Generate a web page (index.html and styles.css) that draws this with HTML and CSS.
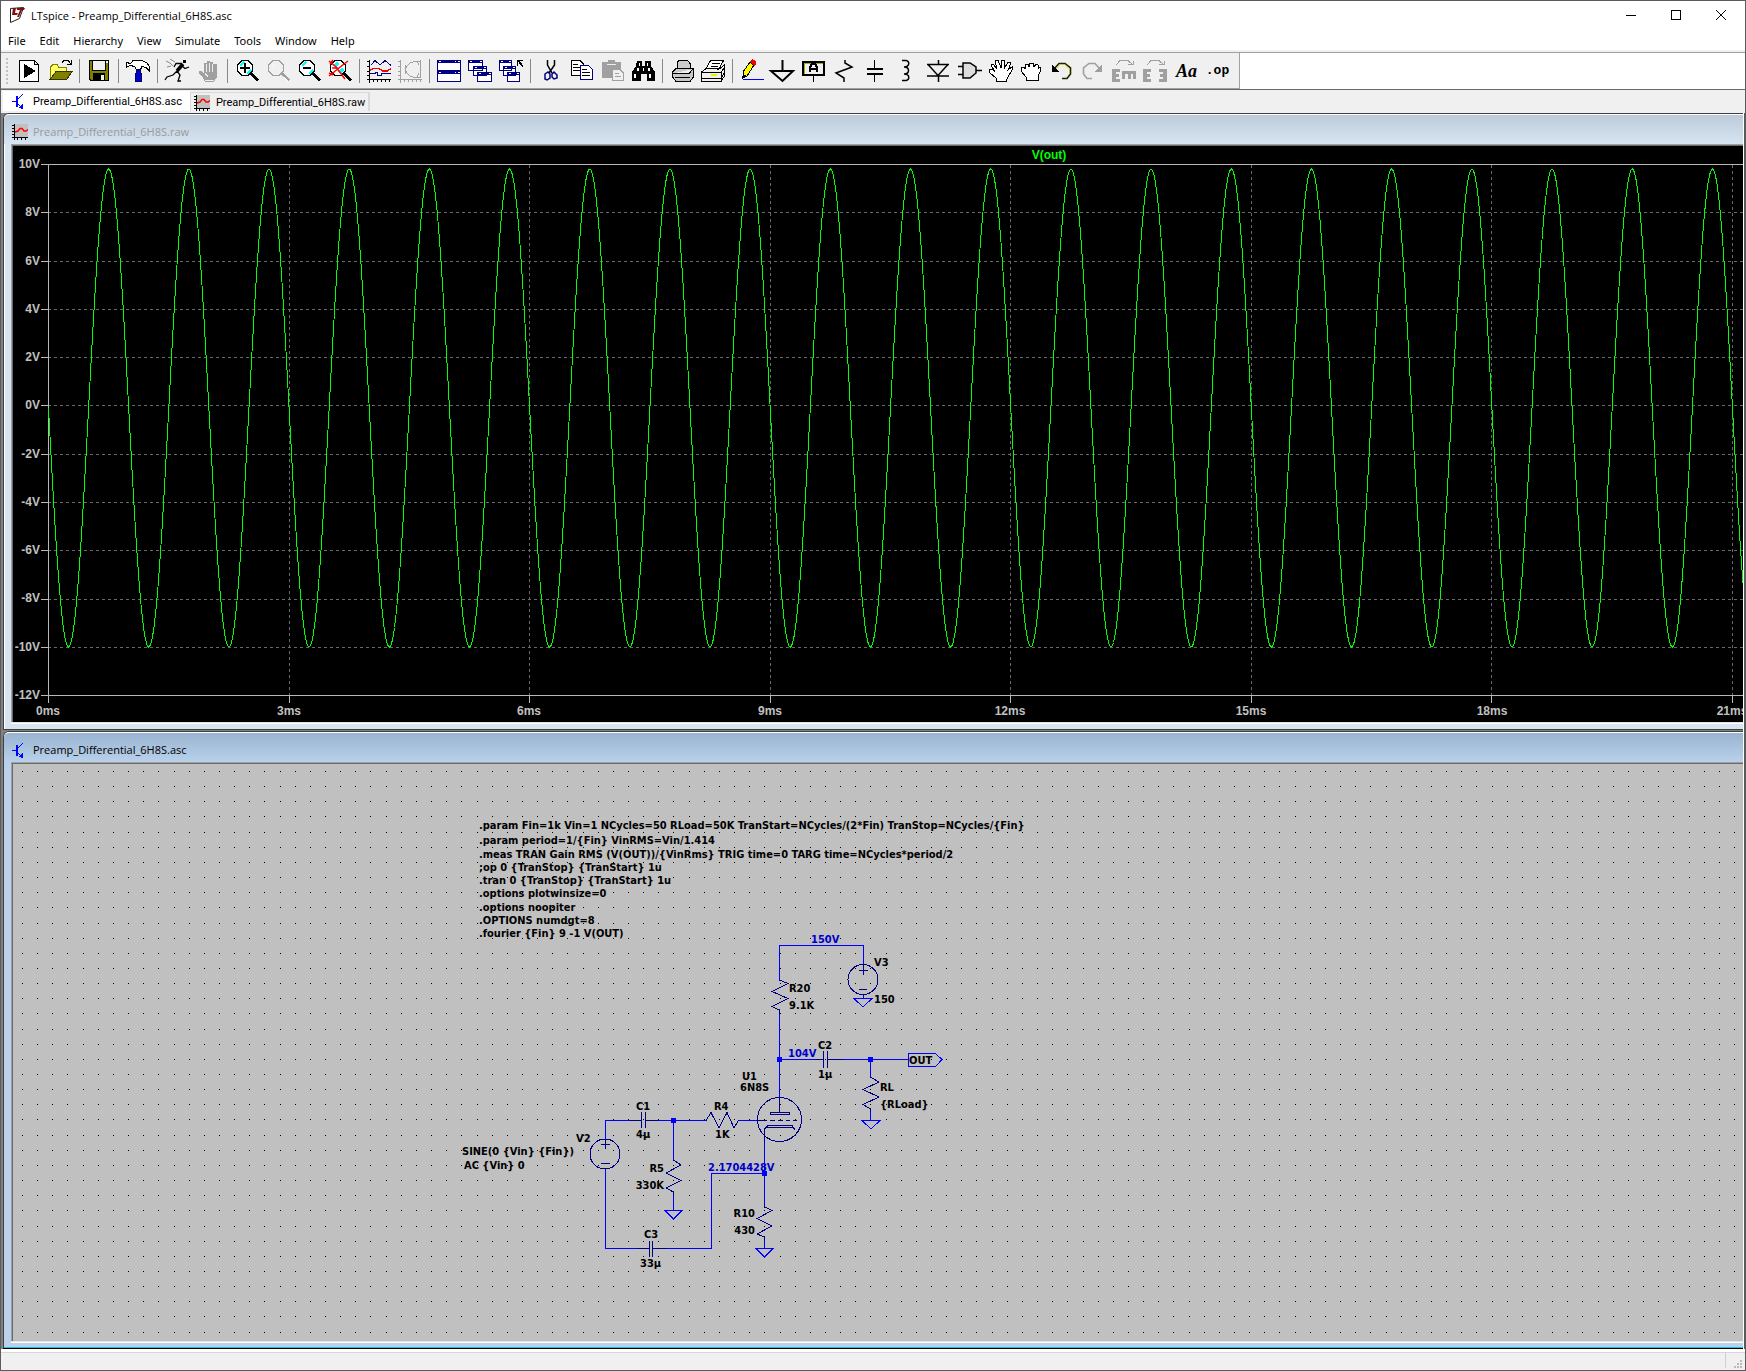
FILE: index.html
```html
<!DOCTYPE html>
<html lang="en">
<head>
<meta charset="utf-8">
<title>LTspice - Preamp_Differential_6H8S.asc</title>
<link rel="stylesheet" href="styles.css">
</head>
<body>
<svg class="defs" aria-hidden="true">
  <symbol id="i-raw" viewBox="0 0 16 16"><path fill="#c0c0c0" d="M3 0H16V13H3z"/><path stroke="#000" fill="none" d="M2.500 0V16M0 13.500H16M0 1.500H2M0 4.500H2M0 7.500H2M0 10.500H2M5.500 14V16M9.500 14V16M13.500 14V16" /><path class="smooth" fill="none" stroke="#f00" stroke-width="1.500" d="M3 8L6 7L8 4.500H10L12 7H14L16 5.500"/></symbol>
  <symbol id="i-asc" viewBox="0 0 16 16"><path fill="none" stroke="#00f" d="M0 8.500H4M5 7L11 1M5 10L10 15"/><path fill="#00f" d="M4 3H6V14H4zM11 16V11L6 15z"/></symbol>
  <symbol id="i-sine" viewBox="0 0 24 24"><path class="k" d="M1.500 1V24M-1 20.500H23M-1 2.500H1M-1 7.500H1M-1 12.500H1M-1 16.500H1M5.500 21V23M9.500 21V23M13.500 21V23M17.500 21V23M21.500 21V23"/></symbol>
  <symbol id="i-lens" viewBox="0 0 24 24"><path fill="none" stroke="currentColor" stroke-width="1.500" d="M6 1.500H12L16.500 6V12L12 16.500H6L1.500 12V6z"/><path stroke="currentColor" stroke-width="3" d="M15 14.500L22 21.500"/></symbol>
</svg>
<div class="app">
  <header class="titlebar">
    <svg class="logo" viewBox="0 0 16 17"><path fill="#fff" stroke="#222" d="M1.500 1.500L14.500 .5L10.500 11.500L1.500 15.500z"/><path fill="#801010" d="M4 1H7L6 6H9L8 8H3zM8 1H16L15 3H13L10 10H8L11 3H8z"/></svg>
    <h1>LTspice - Preamp_Differential_6H8S.asc</h1>
    <div class="winctl">
      <button aria-label="Minimize"><svg viewBox="0 0 10 10"><path d="M0 5.500H10"/></svg></button>
      <button aria-label="Maximize"><svg viewBox="0 0 10 10"><path d="M.5 .5H9.500V9.500H.5z"/></svg></button>
      <button aria-label="Close"><svg viewBox="0 0 10 10"><path class="smooth" d="M0 0L10 10M10 0L0 10"/></svg></button>
    </div>
  </header>
  <nav class="menu">
    <button>File</button><button>Edit</button><button>Hierarchy</button><button>View</button><button>Simulate</button><button>Tools</button><button>Window</button><button>Help</button>
  </nav>
  <div class="toolrow">
    <div class="toolbar" role="toolbar" aria-label="Main">
      <button aria-label="Run"><svg viewBox="0 0 24 24"><path fill="#fff" stroke="#000" d="M1.500 1.500H16.500L20.500 5.500V22.500H1.500zM16.500 1.500V5.500H20.500"/><path d="M6 5V19L18 12z"/></svg></button>
      <button aria-label="Open"><svg viewBox="0 0 24 24"><path fill="#ff6" stroke="#808000" d="M1.500 20V8L4 5.500H8L10 8.500H17.500V12.500H7L2 20"/><path fill="#808000" stroke="#333300" d="M7 12.500H23L18 20H1.500z"/><path class="k" d="M13 3.500L15 1.500H19L22 5M22.500 1V6M18 5.500H22"/></svg></button>
      <i></i>
      <button aria-label="Save"><svg viewBox="0 0 24 24"><path fill="#808000" stroke="#000" d="M1.500 1.500H20.500V21.500H3L1.500 20z"/><path fill="#f0f0f0" stroke="#000" d="M4.500 1.500H17.500V11.500H4.500z"/><path d="M5 14H17V22H5z"/><path fill="#f0f0f0" d="M13 16H16V21H13zM18 2H20V4H18z"/></svg></button>
      <i></i>
      <button aria-label="Control panel"><svg viewBox="0 0 24 24"><path fill="#00c" stroke="#006" d="M9.500 9.500H13.500V14.500H14.500V22.500H8.500V14.500H9.500z"/><path fill="#fff" stroke="#000" d="M-.5 3.500L3.500 4.500L6 1.500H15L20 4L22.500 8V12L19 8.500L15 7.500L13.500 10.500H9.500L7.500 7.500L3.500 6.500L-.5 8z"/></svg></button>
      <i></i>
      <button aria-label="Simulate"><svg viewBox="0 0 24 24"><g class="smooth" fill="none" stroke="#000" stroke-width="1.300"><path d="M16 4.500H10L8 8M16 7L19 9.500L23 8M11 12L7 16L1 18L-1 21M11 12L14 16L12 22H15"/><path stroke-width="3.500" d="M17 5L11 12"/></g><path d="M17 1H20V4H17z"/><path class="smooth" fill="none" stroke="#888" d="M0 2L4 4L7 7M4 0L9 3M1 8L5 7"/></svg></button>
      <button aria-label="Pause"><svg viewBox="0 0 24 24"><path fill="#a0a0a0" d="M2 12H5L7 15V4H10V2H13V3H16V5H20V18L17 23H8L6 19L2 15z"/><path stroke="#eee" fill="none" d="M9.500 5V13M12.500 4V13M15.500 5V13M8 21.500H17M8 14L11 18"/></svg></button>
      <i></i>
      <button aria-label="Zoom in"><svg viewBox="0 0 24 24"><path fill="#fff" d="M6 2H12L16 6V12L12 16H6L2 12V6z"/><path fill="none" stroke="#0ff" stroke-width="2" d="M4 7L8 3M11 15L15 11"/><use href="#i-lens"/><path fill="none" stroke="#000" stroke-width="2" d="M9 4V14M4 9H14"/></svg></button>
      <button aria-label="Zoom area" class="off"><svg viewBox="0 0 24 24"><use href="#i-lens"/><path stroke="#fff" fill="none" d="M5 8L8 5M17 18L21 22"/></svg></button>
      <button aria-label="Zoom out"><svg viewBox="0 0 24 24"><path fill="#fff" d="M6 2H12L16 6V12L12 16H6L2 12V6z"/><path fill="none" stroke="#0ff" stroke-width="2" d="M4 7L8 3M11 15L15 11"/><use href="#i-lens"/><path fill="none" stroke="#000" stroke-width="2" d="M5 9H13"/></svg></button>
      <button aria-label="Zoom to fit"><svg viewBox="0 0 24 24"><path fill="#fff" d="M6 2H12L16 6V12L12 16H6L2 12V6z"/><path fill="none" stroke="#0ff" stroke-width="3" d="M6 7L9 4M10 14L14 10"/><use href="#i-lens"/><path class="smooth" fill="none" stroke="#f00" stroke-width="1.500" d="M0 2L7 8L16 20M19 2L10 9L0 17M1 5L4 1M3 9H9M0 14L4 16"/></svg></button>
      <i></i>
      <button aria-label="Autorange"><svg viewBox="0 0 24 24"><use href="#i-sine"/><path fill="none" stroke="#00008b" d="M3 6L7 1.500L12 6L17 1.500L23 6.500M2 14.500H7V13.500H9V16.500H13V14.500H23"/><path fill="none" stroke="#f00" stroke-width="1.500" d="M2 11L6 9.500H11L15 12H19L23 9.500"/></svg></button>
      <button aria-label="FFT" class="off"><svg viewBox="0 0 24 24"><use href="#i-sine"/><path class="k" d="M21.500 1V18M22 2.500H16L11 4L6 9V12L11 17L16 18.500H22M18 2L20 6M18 18L20 14M6 6L8 9M6 15L8 12"/></svg></button>
      <i></i>
      <button aria-label="Tile"><svg viewBox="0 0 24 24"><path fill="#fff" stroke="#000080" d="M-.5 2.500H22.500V11.500H-.5zM-.5 12.500H22.500V22.500H-.5z"/><path fill="#000080" d="M-1 1H23V4H-1zM-1 12H23V15H-1z"/><path fill="#fff" d="M1 2H3V3H1zM17 2H18V3H17zM20 2H22V3H20zM1 13H3V14H1zM17 13H18V14H17zM20 13H22V14H20z"/></svg></button>
      <button aria-label="Cascade"><svg viewBox="0 0 24 24"><path fill="#fff" stroke="#000080" d="M-.5 1.500H13.500V11.500H-.5zM4.500 7.500H17.500V16.500H4.500zM8.500 13.500H22.500V22.500H8.500z"/><path fill="#000080" d="M-1 1H14V4H-1zM4 7H18V10H4zM8 13H23V16H8z"/><path fill="#fff" d="M1 2H3V3H1zM11 2H13V3H11zM6 8H8V9H6zM15 8H17V9H15zM10 14H12V15H10zM20 14H22V15H20z"/></svg></button>
      <button aria-label="Close all"><svg viewBox="0 0 24 24"><path fill="#fff" stroke="#000080" d="M-.5 1.500H11.500V11.500H-.5zM3.500 7.500H15.500V16.500H3.500zM7.500 13.500H19.500V22.500H7.500z"/><path fill="#000080" d="M-1 1H12V4H-1zM3 7H16V10H3zM7 13H20V16H7z"/><path fill="#fff" d="M1 2H3V3H1zM9 2H11V3H9zM5 8H7V9H5zM13 8H15V9H13zM9 14H11V15H9zM17 14H19V15H17z"/><path class="k" d="M17.500 7V1.500H23M18 2L23 8M19 2L23 7"/></svg></button>
      <i></i>
      <button aria-label="Cut"><svg viewBox="0 0 24 24"><path class="smooth" stroke="#000" fill="none" stroke-width="1.500" d="M8.500 1V6L13 14M15.500 1V6L10 14"/><path class="smooth" fill="none" stroke="#000080" stroke-width="1.500" d="M6 15L9 13L11 15V19L8 21L6 20zM13 15L15 13L18 16V19L15 20L13 18z"/></svg></button>
      <button aria-label="Copy"><svg viewBox="0 0 24 24"><path fill="#fff" stroke="#000" d="M1.500 1.500H10L13.500 5V16.500H1.500zM3 5.500H8M3 8.500H10M3 11.500H10"/><path fill="#fff" stroke="#000080" d="M10.500 6.500H18.500L22.500 10.500V20.500H10.500z"/><path class="k" d="M12 10.500H17M12 13.500H20M12 16.500H20"/></svg></button>
      <button aria-label="Paste" class="off"><svg viewBox="0 0 24 24"><path fill="#a0a0a0" d="M1 3H7V1H14V3H20V19H1z"/><path stroke="#eee" d="M6 5.500H15"/><path fill="#f0f0f0" stroke="#a0a0a0" d="M11.500 10.500H19L22.500 14V21.500H11.500zM14 14.500H18M14 17.500H20"/></svg></button>
      <button aria-label="Find"><svg viewBox="0 0 24 24"><path d="M5 2H10V7H13V2H19V7L23 13V22H15V15H9V22H0V13L4 7z"/><path fill="#fff" d="M7 4H8V7H7zM15 4H16V7H15zM5 9H7V12H5zM16 9H18V12H16zM2 15H4V19H2zM17 15H19V19H17zM11 9H12V12H11z"/></svg></button>
      <i></i>
      <button aria-label="Print"><svg viewBox="0 0 24 24"><path fill="#ccc" stroke="#000" d="M6.500 10V3L8 1.500H16.500L19.500 5V10"/><path fill="#c8c8c8" stroke="#000" d="M1.500 13L5 9.500H22.500V18L19 22.500H5L1.500 18zM2 14.500H18L22 10M4 18.500H19"/></svg></button>
      <button aria-label="Print setup"><svg viewBox="0 0 24 24"><path fill="#fff" stroke="#000" d="M4 10L8.500 1.500H21.500L17 10zM10 4.500H18M9 7.500H16"/><path fill="#f0f0f0" stroke="#000" d="M-.5 13L4 9.500H18L22.500 6V17L19 22.500H-.5zM0 13.500H19L22 9M19 14V22M0 19.500H19L22 14"/><path fill="#ee0" d="M9 15H15V17H9z"/></svg></button>
      <i></i>
      <button aria-label="Wire"><svg viewBox="0 0 24 24"><path fill="#ff0" stroke="#000" d="M9 3L13 6L6 17L2 19V13z"/><path fill="#f00" d="M9 3L11 0L15 2V5L13 7z"/><path d="M2 15L6 17L1 20z"/><path stroke="#00f" d="M2 20.500H23"/></svg></button>
      <button aria-label="Ground"><svg viewBox="0 0 24 24"><path class="k m" d="M10.500 1V12M-1 12H21L10.500 22z"/></svg></button>
      <button aria-label="Label net"><svg viewBox="0 0 24 24"><path fill="none" stroke="#000" stroke-width="2" d="M0 3H21V16H0z"/><path stroke="#aa0" fill="none" d="M1.500 15V4.500H20"/><path class="k" d="M10.500 17V23"/><path class="k" stroke-width="2" d="M7 13V8L9 5H12L14 8V13M7 10H14"/></svg></button>
      <button aria-label="Resistor"><svg viewBox="0 0 24 24"><path class="k s" d="M11 1V4L18 8L2 14L10 19V23"/></svg></button>
      <button aria-label="Capacitor"><svg viewBox="0 0 24 24"><path class="k" stroke-width="2" d="M2 10H18M2 15H18"/><path class="k" d="M9.500 1V9M9.500 15V23"/></svg></button>
      <button aria-label="Inductor"><svg viewBox="0 0 24 24"><path class="k s" d="M6 1.500H10C14 2 14 8 8 8C14 8 14 15 8 15C14 15 14 21 10 21.500H6"/></svg></button>
      <button aria-label="Diode"><svg viewBox="0 0 24 24"><path class="k s" d="M11.500 1V5M0 5.500H22M1 5.500L11 16.500L21 5.500M0 17H22M11.500 17V23"/></svg></button>
      <button aria-label="Component"><svg viewBox="0 0 24 24"><path class="smooth" fill="#ddd" stroke="#000" stroke-width="1.500" d="M5 4H12L18 8V14L12 19H5zM0 7.500H5M0 15.500H5M18 11.500H24"/></svg></button>
      <button aria-label="Move"><svg viewBox="0 0 24 24"><path fill="#fff" stroke="#000" d="M8 22.500L7 19L1 14L0 11L3 10L6 13L2 6L4 5L8 10L6 2L9 1L12 9L13 1H16L15 10L19 3L22 4L19 11L23 8V11L19 18L17 22.500z"/></svg></button>
      <button aria-label="Drag"><svg viewBox="0 0 24 24"><path fill="#fff" stroke="#000" d="M6 21.500V18L1 12V9L4 8L5 10V6L8 5L9 8L10 4H13L14 8L16 5L18 6V10L20 8L21 11L18 17V21.500z"/></svg></button>
      <button aria-label="Undo"><svg viewBox="0 0 24 24"><path class="smooth" fill="none" stroke="#222200" stroke-width="1.600" d="M3 10L8 4.500H14L19.500 9V15L16 19.500H11"/><path class="smooth" stroke="#cc0" stroke-width=".7" fill="none" d="M5 10L9 5.500H14L18.500 10V15"/><path d="M1 5V12.500H8z"/></svg></button>
      <button aria-label="Redo" class="off"><svg viewBox="0 0 24 24"><path class="smooth" fill="none" stroke="#a0a0a0" stroke-width="1.600" d="M18 10L13 4.500H7L1.500 9V15L5 19.500H10"/><path fill="#a0a0a0" d="M20 5V12.500H13z"/></svg></button>
      <button aria-label="Rotate" class="off"><svg viewBox="0 0 24 24"><path fill="#a0a0a0" d="M-1 10H7V13H3V15H6V18H3V20H7V23H-1zM9 12H23V20H20V15H18V20H15V15H12V20H9z"/><path class="k" d="M3 6L7 1.500H15L20 6M20.500 2V6M15 5.500H20"/></svg></button>
      <button aria-label="Mirror" class="off"><svg viewBox="0 0 24 24"><path fill="#a0a0a0" d="M-1 10H7V13H3V15H6V18H3V20H7V23H-1zM23 10H15V13H19V15H16V18H19V20H15V23H23z"/><path class="k" d="M3 6L7 1.500H15L20 6M20.500 2V6M15 5.500H20"/></svg></button>
      <button class="txt aa">Aa</button>
      <button class="txt op">.op</button>
    </div>
  </div>
  <div class="tabs" role="tablist">
    <button role="tab" aria-selected="true"><svg viewBox="0 0 16 16"><use href="#i-asc"/></svg>Preamp_Differential_6H8S.asc</button>
    <button role="tab" aria-selected="false"><svg viewBox="0 0 16 16"><use href="#i-raw"/></svg>Preamp_Differential_6H8S.raw</button>
  </div>
  <main class="mdi">
    <section class="win inactive">
      <h2><svg viewBox="0 0 16 16"><use href="#i-raw"/></svg>Preamp_Differential_6H8S.raw</h2>
      <div class="pane plot">
        <svg class="canvas" role="img" aria-label="V(out) waveform"><g transform="translate(-13 -146)">
          <path id="grid" class="grid"/>
          <path id="axes" class="axes"/>
          <path id="trace" class="trace"/>
          <text class="vout" x="1049" y="159">V(out)</text>
          <g class="ylab"><text x="40" y="168">10V</text><text x="40" y="216">8V</text><text x="40" y="265">6V</text><text x="40" y="313">4V</text><text x="40" y="361">2V</text><text x="40" y="409">0V</text><text x="40" y="458">-2V</text><text x="40" y="506">-4V</text><text x="40" y="554">-6V</text><text x="40" y="602">-8V</text><text x="40" y="651">-10V</text><text x="40" y="699">-12V</text></g>
          <g class="xlab"><text x="48" y="715">0ms</text><text x="289" y="715">3ms</text><text x="529" y="715">6ms</text><text x="770" y="715">9ms</text><text x="1010" y="715">12ms</text><text x="1251" y="715">15ms</text><text x="1492" y="715">18ms</text><text x="1732" y="715">21ms</text></g>
        </g></svg>
      </div>
    </section>
    <section class="win active">
      <h2><svg viewBox="0 0 16 16"><use href="#i-asc"/></svg>Preamp_Differential_6H8S.asc</h2>
      <div class="pane schem">
        <svg class="canvas" role="img" aria-label="Schematic"><g transform="translate(-13 -764)">
          <path id="dots"/>
          <path class="wire" d="M779.500 980V945.500H863.500V964M779.500 1011V1097M779.500 1059.500H815M843 1059.500H908M870.500 1059V1078M870.500 1109V1120M863.500 994V998M605.500 1139V1120.500H630M658 1120.500H707M738 1120.500H758M673.500 1120V1161M673.500 1193V1210M764.500 1141V1206M764.500 1238V1248M764.500 1173.500H711.500V1248.500H667M637 1248.500H605.500V1169"/>
          <path class="wire" d="M908.500 1053.500H935.500L942 1059.500L935.500 1066.500H908.500zM862 1120.500H880L871 1129zM854 998.500H872L863 1007zM665 1210.500H682L673.500 1219zM756 1248.500H773L764.500 1257z"/>
          <path class="node" d="M777 1057h5v5h-5zM868 1057h5v5h-5zM671 1118h5v5h-5zM762 1171h5v5h-5z"/>
          <g class="sym">
            <path d="M779.500 980L788 983.500L772 991.500L788 998.500L772 1006.500L779.500 1010V1014"/>
            <path d="M870.500 1077L879 1082L863 1089.500L879 1097L863 1104.500L870.500 1109V1112"/>
            <path d="M673.500 1160L681 1165L666 1173L681 1180.500L666 1188L673.500 1192V1196"/>
            <path d="M764.500 1204V1207L772 1210.500L757 1218.500L772 1226L757 1234L764.500 1237V1241"/>
            <path d="M706 1120.500L711 1112.500L719 1128L727 1112.500L734 1128L738.500 1120.500"/>
            <path d="M815 1059.500H823M823.500 1051V1068M827.500 1051V1068M828 1059.500H843"/>
            <path d="M630 1120.500H641M641.500 1112V1128M645.500 1112V1128M646 1120.500H658"/>
            <path d="M637 1248.500H649M649.500 1241V1257M652.500 1241V1257M653 1248.500H667"/>
            <circle cx="863" cy="979.500" r="15"/><path d="M863.500 964V975M859 970.500H868M859 989.500H867"/>
            <circle cx="605" cy="1154" r="15"/><path d="M605.500 1139V1149M601 1144.500H610M601 1163.500H610"/>
            <circle cx="779.500" cy="1119.500" r="22"/>
            <path d="M779.500 1097V1112M770.500 1112.500H789.500V1114.500H770.500zM758 1120.500H767M770 1120.500H775M778 1120.500H783M786 1120.500H790M793 1120.500H797M764.500 1142V1129L768 1125.500H792L795 1130M767 1127.500H793"/>
          </g>
          <g class="txts">
            <text x="479" y="829">.param Fin=1k Vin=1 NCycles=50 RLoad=50K TranStart=NCycles/(2*Fin) TranStop=NCycles/{Fin}</text>
            <text x="479" y="844">.param period=1/{Fin} VinRMS=Vin/1.414</text>
            <text x="479" y="858">.meas TRAN Gain RMS (V(OUT))/{VinRms} TRIG time=0 TARG time=NCycles*period/2</text>
            <text x="479" y="871">;op 0 {TranStop} {TranStart} 1u</text>
            <text x="479" y="884">.tran 0 {TranStop} {TranStart} 1u</text>
            <text x="479" y="897">.options plotwinsize=0</text>
            <text x="479" y="911">.options noopiter</text>
            <text x="479" y="924">.OPTIONS numdgt=8</text>
            <text x="479" y="937">.fourier {Fin} 9 -1 V(OUT)</text>
            <text x="874" y="966">V3</text><text x="874" y="1003">150</text>
            <text x="789" y="992">R20</text><text x="789" y="1009">9.1K</text>
            <text x="818" y="1049">C2</text><text x="818" y="1078">1µ</text>
            <text x="742" y="1080">U1</text><text x="740" y="1091">6N8S</text>
            <text x="714" y="1110">R4</text><text x="715" y="1138">1K</text>
            <text x="880" y="1091">RL</text><text x="880" y="1108">{RLoad}</text>
            <text x="909" y="1064">OUT</text>
            <text x="636" y="1110">C1</text><text x="636" y="1138">4µ</text>
            <text x="576" y="1142">V2</text>
            <text x="462" y="1155">SINE(0 {Vin} {Fin})</text><text x="464" y="1169">AC {Vin} 0</text>
            <text class="end" x="664" y="1172">R5</text><text class="end" x="664" y="1189">330K</text>
            <text x="644" y="1238">C3</text><text x="640" y="1267">33µ</text>
            <text class="end" x="755" y="1217">R10</text><text class="end" x="755" y="1234">430</text>
            <g class="net"><text x="811" y="943">150V</text><text x="788" y="1057">104V</text><text x="708" y="1171">2.1704428V</text></g>
          </g>
        </g></svg>
      </div>
    </section>
  </main>
  <footer class="status"><span></span><svg viewBox="0 0 9 9"><path fill="#bbb" d="M6 0h2v2h-2zM3 3h2v2h-2zM6 3h2v2h-2zM0 6h2v2h-2zM3 6h2v2h-2zM6 6h2v2h-2z"/></svg></footer>
</div>
<script src="app.js"></script>
</body>
</html>
```
FILE: styles.css
```css
* { box-sizing: border-box; }
body { margin: 0; background: #5a5a60; font: 11px/16px "Open Sans", "Noto Sans", sans-serif; color: #000; }
button { font: inherit; color: inherit; border: 0; padding: 0; background: none; }
svg { display: block; flex: none; shape-rendering: crispEdges; }
.smooth { shape-rendering: auto; }
.defs { position: absolute; width: 0; height: 0; }
.app { display: flex; flex-direction: column; height: 100vh; min-height: 960px; padding: 1px; overflow: hidden; }

.titlebar { display: flex; align-items: center; height: 29px; padding-left: 8px; background: #fff; }
.titlebar h1 { flex: 1; margin: 0 0 0 6px; font-size: 11px; font-weight: 400; }
.logo { width: 16px; height: 17px; shape-rendering: auto; }
.winctl { display: flex; align-self: flex-start; margin-right: 2px; }
.winctl button { display: grid; place-items: center; width: 45px; height: 28px; }
.winctl svg { width: 10px; height: 10px; fill: none; stroke: #000; }

.menu { display: flex; height: 22px; background: #fff; border-bottom: 2px solid #f0f0f0; box-shadow: 0 1px #a0a0a0; position: relative; font-family: "Noto Sans", sans-serif; }
.menu button { padding: 1px 7px 0; }

.toolrow { display: flex; height: 38px; padding-top: 1px; background: #fff; border-bottom: 1px solid #696969; }
.toolbar { display: flex; align-items: center; padding: 0 6px 0 5px; background: #f0f0f0; border-right: 1px solid #a0a0a0; border-bottom: 1px solid #a0a0a0; }
.toolbar::before { content: ""; width: 2px; height: 26px; margin-right: 6px; background: repeating-linear-gradient(#c0c0c0 0 2px, transparent 2px 4px); }
.toolbar button { width: 31px; height: 24px; padding-left: 4px; }
.toolbar svg { width: 24px; height: 24px; overflow: visible; color: #000; }
.toolbar i { width: 1px; height: 24px; margin: 0 4px 0 3px; background: #888; }
.toolbar .off svg { color: #a0a0a0; }
.k { fill: none; stroke: #000; }
symbol { overflow: visible; }
#i-sine .k { stroke: currentColor; }
.off .k { stroke: #a0a0a0; }
.m { stroke-width: 2; shape-rendering: auto; }
.s { stroke-width: 1.5; shape-rendering: auto; }
.toolbar .txt { padding: 0; text-align: center; }
.toolbar .aa { font: italic bold 18px/24px "Liberation Serif", serif; }
.toolbar .op { font: bold 13px/22px "Liberation Mono", monospace; }

.tabs { display: flex; height: 23px; padding: 1px 2px; background: #f0f0f0; font: 11px/19px Roboto, "Liberation Sans", sans-serif; }
.tabs button { display: flex; align-items: center; gap: 5px; height: 20px; padding: 0 8px 0 9px; }
.tabs svg { width: 16px; height: 16px; }
.tabs button + button { margin-top: 1px; height: 19px; padding: 1px 3px 0; gap: 6px; border: 1px solid #d9d9d9; border-width: 1px 2px 0 1px; }
.tabs [aria-selected="true"] { background: #fff; }

.mdi { flex: 1; display: flex; flex-direction: column; min-height: 0; margin-right: 1px; padding-left: 2px; border-right: 1px solid #fff; background: #808080; }
.win { display: flex; flex-direction: column; padding: 0 0 7px 7px; border: solid #404040; border-width: 1px 0 1px 1px; border-top-left-radius: 6px; box-shadow: inset 1px 1px #fff; }
.win h2 { display: flex; align-items: center; gap: 5px; height: 30px; margin: 0 0 0 -7px; padding: 5px 0 0 8px; font-size: 11px; font-weight: 400; border-top-left-radius: 5px; }
.win h2 svg { width: 16px; height: 16px; }
.inactive { background: #d7e4f2; }
.inactive h2 { color: #9a9a9a; background: linear-gradient(#bccbda, #d7e4f2); border-top: 1px solid #fff; }
.active { flex: 1; min-height: 0; background: #b9d1ea; border-bottom-color: #000; box-shadow: inset 0 -1px #20c0e0; margin-top: 1px; }
.active h2 { background: linear-gradient(#99b4d1, #b9d1ea); border-top: 1px solid #fff; }
.pane { border: solid #a0a0a0; border-width: 1px 0 0 1px; box-shadow: inset 1px 1px #696969, 0 1px #e3e3e3, 0 2px #fff; padding: 1px 0 0 1px; overflow: hidden; }
.canvas { width: 100%; height: 100%; }
.plot { height: 578px; background: #000; }
.schem { flex: 1; min-height: 0; background: #c0c0c0; }

.plot text { font: bold 12px "Liberation Sans", Arial, sans-serif; fill: #c0c0c0; }
.plot .vout { fill: #0f0; text-anchor: middle; }
.ylab { text-anchor: end; }
.xlab { text-anchor: middle; }
.grid { fill: none; stroke: #696969; stroke-dasharray: 3 3; }
.axes { fill: none; stroke: #b8b8b8; }
.trace { fill: none; stroke: #0f0; }

.wire { fill: none; stroke: #00f; }
.node { fill: #00f; }
.sym { fill: none; stroke: #000080; }
.txts { font: bold 11px "DejaVu Sans Condensed", "DejaVu Sans", sans-serif; fill: #000; }
.txts .end { text-anchor: end; }
.net { fill: #0000cc; }

.status { display: flex; justify-content: flex-end; gap: 8px; height: 21px; background: #f0f0f0; border-top: 3px solid #fff; box-shadow: inset 0 1px #d7d7d7; padding-right: 2px; }
.status span { width: 1px; height: 16px; background: #d0d0d0; }
.status svg { width: 9px; height: 9px; align-self: flex-end; margin-bottom: 1px; }
```
FILE: app.js
```js
const X0 = 48, Y0 = 164, DIV = 240.57, VOLT = 24.14, PERIOD = 80.19;
const right = Math.max(1760, innerWidth + 20);

let grid = "", axes = `M41 164.5H${right}M41 695.5H${right}M48.5 164V703`;
for (let v = 0; v <= 11; v++) {
  const y = Math.round(Y0 + v * 2 * VOLT) + 0.5;
  axes += `M41 ${y}H48`;
  if (v > 0 && v < 11) grid += `M48 ${y}H${right}`;
}
for (let x = X0 + DIV; x < right; x += DIV) {
  const px = Math.round(x) + 0.5;
  grid += `M${px} 165V695`;
  axes += `M${px} 695V703`;
}

let trace = "";
for (let x = 48; x <= right; x++) {
  const y = 408 + 239 * Math.sin((2 * Math.PI * (x - X0)) / PERIOD);
  trace += (trace ? "L" : "M") + (x + 0.5) + " " + y.toFixed(1);
}

// One-pixel schematic grid, snapped to whole pixels
let dots = "";
for (let j = 0; j < 70; j++)
  for (let i = 0; 22 + i * 15.15 < right; i++)
    dots += `M${Math.round(22 + i * 15.15)} ${Math.round(771 + j * 15.15)}h1v1h-1z`;

document.getElementById("grid").setAttribute("d", grid);
document.getElementById("axes").setAttribute("d", axes);
document.getElementById("trace").setAttribute("d", trace);
document.getElementById("dots").setAttribute("d", dots);
```
